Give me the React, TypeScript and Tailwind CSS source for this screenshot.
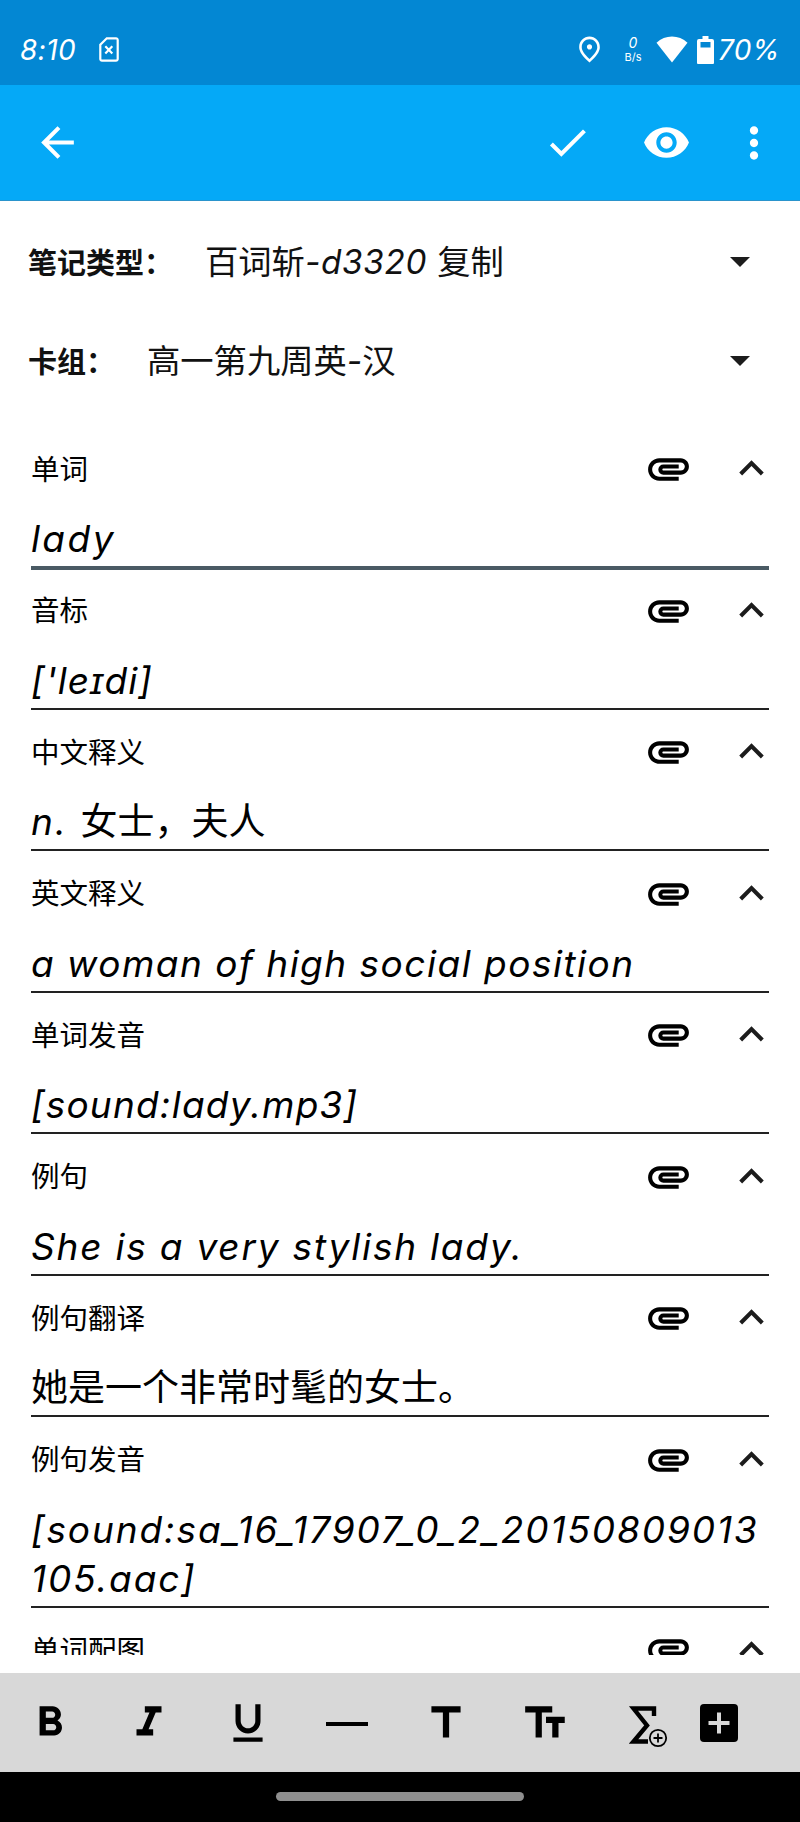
import { useState } from "react";
import type { ReactNode } from "react";
import clsx from "clsx";
import {
  MdArrowBack,
  MdAttachment,
  MdCheck,
  MdExpandLess,
  MdFormatBold,
  MdFormatItalic,
  MdFormatSize,
  MdFormatUnderlined,
  MdMoreVert,
  MdOutlinePlace,
  MdRemoveRedEye,
  MdTitle,
} from "react-icons/md";

type Field = {
  label: string;
  value: string;
  valueClass?: string;
};

const LATIN = "font-['Inter','Noto_Sans_CJK_SC',sans-serif] italic [font-feature-settings:'cv11']";
const HAN = "font-['Noto_Sans_CJK_SC',sans-serif]";

const FIELDS: Field[] = [
  { label: "单词", value: "lady", valueClass: "tracking-[2.4px]" },
  { label: "音标", value: "['leɪdi]", valueClass: "tracking-[1.1px]" },
  { label: "中文释义", value: "n. 女士，夫人", valueClass: "tracking-[2.2px]" },
  { label: "英文释义", value: "a woman of high social position", valueClass: "tracking-[1.5px]" },
  { label: "单词发音", value: "[sound:lady.mp3]", valueClass: "tracking-[1.2px]" },
  { label: "例句", value: "She is a very stylish lady.", valueClass: "tracking-[1.8px]" },
  { label: "例句翻译", value: "她是一个非常时髦的女士。" },
  { label: "例句发音", value: "[sound:sa_16_17907_0_2_20150809013105.aac]", valueClass: "tracking-[1.9px]" },
  { label: "单词配图", value: "" },
];

// Latin runs are slanted, Han runs stay upright
function Mixed({ text, className }: { text: string; className?: string }) {
  const runs = text.match(/[\u3000-\u9fff\uff00-\uffef]+|[^\u3000-\u9fff\uff00-\uffef]+/g) ?? [];
  return (
    <>
      {runs.map((run, i) => (
        <span
          key={i}
          className={clsx("leading-none", /[\u3000-\u9fff\uff00-\uffef]/.test(run) ? HAN : [LATIN, className])}
        >
          {run}
        </span>
      ))}
    </>
  );
}

function StatusBar() {
  return (
    <div className="flex h-[85px] shrink-0 items-center bg-[#0387d3] pt-[14px] pl-[20px] pr-[21px] text-white">
      <span className={clsx(LATIN, "w-[79px] text-[28px] leading-8 tracking-[0.4px]")}>8:10</span>
      <svg width="20" height="25" viewBox="0 0 20 25" fill="none" stroke="currentColor" strokeWidth="2.2">
        <path d="M7.8 1.3H17a1.7 1.7 0 0 1 1.7 1.7v19a1.7 1.7 0 0 1-1.7 1.7H3A1.7 1.7 0 0 1 1.3 22V7.8z" />
        <path d="M6.3 9.3l7 7.2m0-7.2l-7 7.2" />
      </svg>
      <MdOutlinePlace className="ml-auto size-[31px]" />
      <div className={clsx(LATIN, "ml-[16px] flex w-[24px] flex-col items-center leading-none")}>
        <span className="text-[14px] leading-[14px]">0</span>
        <span className="text-[11px] leading-[14px] not-italic">B/s</span>
      </div>
      <svg className="ml-[11px]" width="32" height="27" viewBox="0 0 32 27" fill="currentColor">
        <path d="M.5 6.8C4.8 2.6 10.3.5 16 .5s11.2 2.1 15.5 6.3L16 26.5z" />
      </svg>
      <svg className="ml-[9px]" width="17" height="28" viewBox="0 0 17 28" fill="currentColor" fillRule="evenodd">
        <path d="M5.5 0h6v3H15a2 2 0 0 1 2 2v22a1 1 0 0 1-1 1H1a1 1 0 0 1-1-1V5a2 2 0 0 1 2-2h3.5zM3.5 6v5.5h10V6z" />
      </svg>
      <span className={clsx(LATIN, "ml-[4px] w-[61px] text-[28px] leading-8 tracking-[0.4px] whitespace-nowrap")}>
        70%
      </span>
    </div>
  );
}

function AppBar() {
  return (
    <div className="flex h-[116px] shrink-0 items-center border-b border-[#2a94cc] bg-[#05a9f7] pl-[33px] pr-[21px] text-white">
      <MdArrowBack className="size-[49px]" />
      <MdCheck className="ml-auto size-[49px]" />
      <MdRemoveRedEye className="ml-[50px] size-[49px]" />
      <MdMoreVert className="ml-[38px] size-[50px]" />
    </div>
  );
}

function Spinner({ label, children }: { label: string; children: ReactNode }) {
  return (
    <div className="flex h-[99px] items-center pl-[28px] pr-[50px] text-[#111]">
      <span className={clsx(HAN, "-mt-[2px] text-[29px] font-bold leading-10")}>{label}</span>
      <span className="-mt-px ml-[32px] text-[33.3px] leading-10 whitespace-nowrap">{children}</span>
      <svg className="ml-auto" width="20" height="10" viewBox="0 0 20 10" fill="#1c1c1c">
        <path d="M0 0h20L10 10z" />
      </svg>
    </div>
  );
}

function FieldRow({ field, active, onFocus }: { field: Field; active: boolean; onFocus: () => void }) {
  return (
    <div className="px-[31px] text-black" onClick={onFocus}>
      <div className="flex h-[65px] items-center pt-[15px]">
        <span className={clsx(HAN, "-mt-[2px] text-[28.5px] leading-9")}>{field.label}</span>
        <MdAttachment className="ml-auto size-[49px]" />
        <MdExpandLess className="ml-[34px] -mr-[7px] size-[49px] text-[#1c1c1c]" />
      </div>
      <div
        className={clsx(
          "mt-[20.5px] font-['Inter',sans-serif] text-[37px] leading-[49px] break-all",
          active ? "border-b-4 border-[#4a5a64] pb-[3px]" : "mb-[2px] border-b-2 border-[#222] pb-[3px]",
        )}
      >
        <Mixed text={field.value} className={field.valueClass} />
      </div>
    </div>
  );
}

function ToolButton({ children }: { children: ReactNode }) {
  return <button className="flex w-[99.2px] shrink-0 items-center justify-center">{children}</button>;
}

function FormatToolbar() {
  return (
    <div className="flex h-[99px] shrink-0 items-center bg-[#d8d8d8] text-black">
      <ToolButton>
        <MdFormatBold className="size-[50px]" />
      </ToolButton>
      <ToolButton>
        <MdFormatItalic className="size-[50px]" />
      </ToolButton>
      <ToolButton>
        <MdFormatUnderlined className="size-[50px]" />
      </ToolButton>
      <ToolButton>
        <span className="mt-[2px] h-[4px] w-[42px] bg-black" />
      </ToolButton>
      <ToolButton>
        <MdTitle className="size-[50px]" />
      </ToolButton>
      <ToolButton>
        <MdFormatSize className="size-[50px] -scale-x-100" />
      </ToolButton>
      <ToolButton>
        <svg width="50" height="50" viewBox="0 0 50 50" fill="none" stroke="currentColor">
          <path d="M34 18v-7.500H13.500L27 27.500 13.500 43.500H28" strokeWidth="4.400" />
          <circle cx="38" cy="40" r="8.200" strokeWidth="1.800" />
          <path d="M38 35.500v9M33.500 40h9" strokeWidth="1.800" />
        </svg>
      </ToolButton>
      <svg className="ml-[6px]" width="38" height="38" viewBox="0 0 38 38">
        <rect width="38" height="38" rx="4" fill="#000" />
        <path d="M19 8.500v21M8.500 19h21" stroke="#d8d8d8" strokeWidth="4" />
      </svg>
    </div>
  );
}

export default function App() {
  const [focused, setFocused] = useState(0);

  return (
    <div className="flex h-[1822px] w-[800px] flex-col overflow-hidden bg-white">
      <StatusBar />
      <AppBar />
      <div className="h-[1454px] shrink-0 overflow-hidden pt-[11px]">
        <Spinner label="笔记类型：">
          <Mixed text="百词斩-d3320 复制" className="tracking-[0.7px]" />
        </Spinner>
        <Spinner label="卡组：">
          <Mixed text="高一第九周英-汉" />
        </Spinner>
        <div className="pt-[18.5px]">
          {FIELDS.map((field, i) => (
            <FieldRow key={field.label} field={field} active={i === focused} onFocus={() => setFocused(i)} />
          ))}
        </div>
      </div>
      <div className="h-[18px] shrink-0" />
      <FormatToolbar />
      <div className="flex h-[51px] shrink-0 justify-center bg-black pt-[20px]">
        <div className="h-[9px] w-[248px] rounded-full bg-[#8f8f8f]" />
      </div>
    </div>
  );
}
